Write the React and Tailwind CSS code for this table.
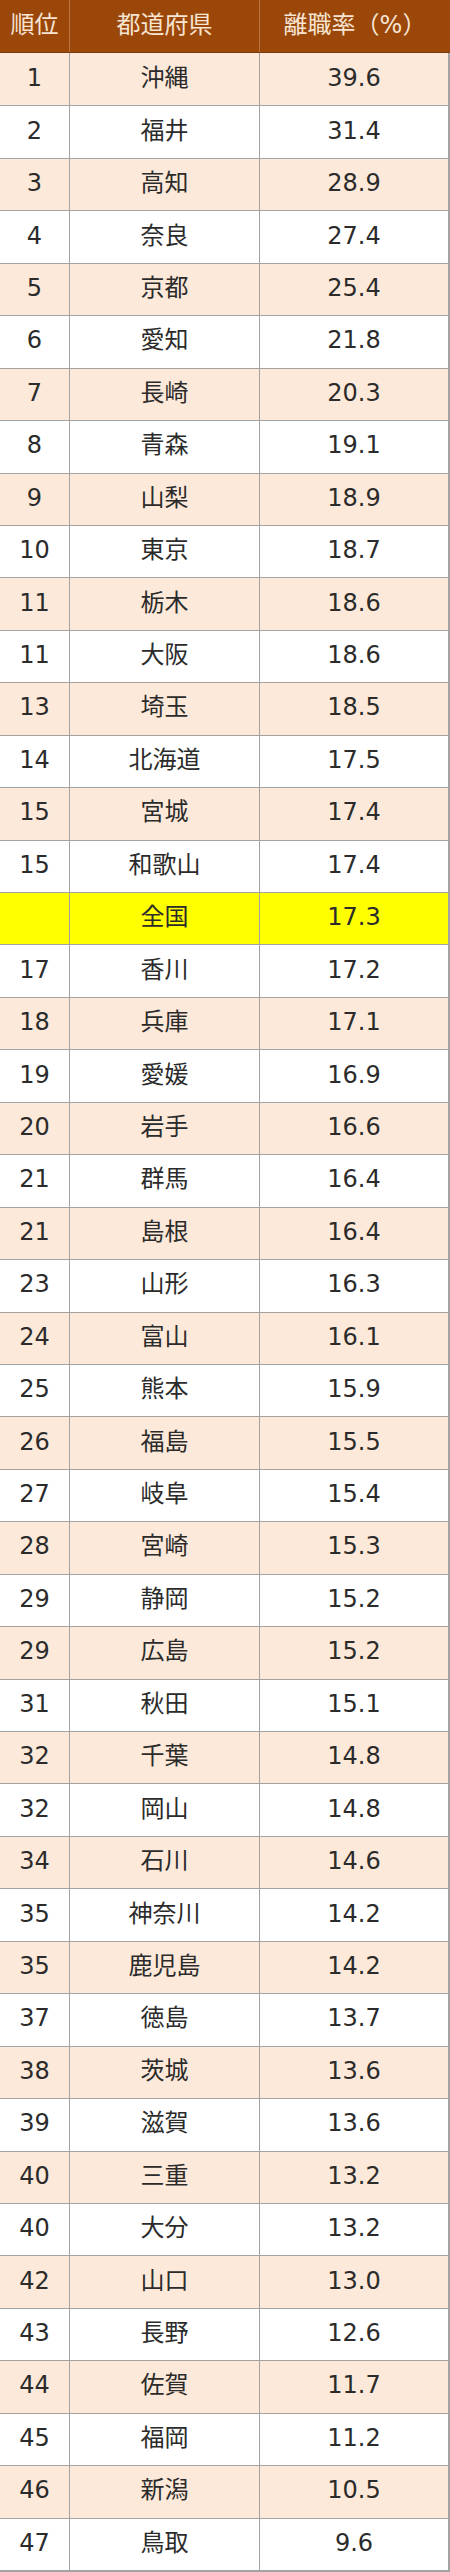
const ROWS = [
  ['1', '沖縄', '39.6'], ['2', '福井', '31.4'], ['3', '高知', '28.9'], ['4', '奈良', '27.4'],
  ['5', '京都', '25.4'], ['6', '愛知', '21.8'], ['7', '長崎', '20.3'], ['8', '青森', '19.1'],
  ['9', '山梨', '18.9'], ['10', '東京', '18.7'], ['11', '栃木', '18.6'], ['11', '大阪', '18.6'],
  ['13', '埼玉', '18.5'], ['14', '北海道', '17.5'], ['15', '宮城', '17.4'], ['15', '和歌山', '17.4'],
  ['', '全国', '17.3'], ['17', '香川', '17.2'], ['18', '兵庫', '17.1'], ['19', '愛媛', '16.9'],
  ['20', '岩手', '16.6'], ['21', '群馬', '16.4'], ['21', '島根', '16.4'], ['23', '山形', '16.3'],
  ['24', '富山', '16.1'], ['25', '熊本', '15.9'], ['26', '福島', '15.5'], ['27', '岐阜', '15.4'],
  ['28', '宮崎', '15.3'], ['29', '静岡', '15.2'], ['29', '広島', '15.2'], ['31', '秋田', '15.1'],
  ['32', '千葉', '14.8'], ['32', '岡山', '14.8'], ['34', '石川', '14.6'], ['35', '神奈川', '14.2'],
  ['35', '鹿児島', '14.2'], ['37', '徳島', '13.7'], ['38', '茨城', '13.6'], ['39', '滋賀', '13.6'],
  ['40', '三重', '13.2'], ['40', '大分', '13.2'], ['42', '山口', '13.0'], ['43', '長野', '12.6'],
  ['44', '佐賀', '11.7'], ['45', '福岡', '11.2'], ['46', '新潟', '10.5'], ['47', '鳥取', '9.6'],
]

function rowBg(i) {
  if (i === 16) return 'bg-[#ffff00]'
  return i % 2 === 0 ? 'bg-[#fde9d9]' : 'bg-white'
}

export default function App() {
  return (
    <div className="w-[450px] bg-white text-[24px] leading-none text-[#2b2b2b] font-['DejaVu_Sans','Noto_Sans_CJK_JP',sans-serif]">
      {/* Header */}
      <div className="grid grid-cols-[69px_190px_1fr] h-[53px] bg-[#9a4709] text-[#f7e4d2] border-b border-[#7a3a0a]">
        <div className="flex items-center justify-center pb-[2px]">順位</div>
        <div className="flex items-center justify-center pb-[2px] border-l border-[#b87340]">都道府県</div>
        <div className="flex items-center justify-center pb-[2px] border-l border-[#b87340]">離職率（%）</div>
      </div>

      {/* Rows */}
      <div className="border-r-2 border-b-2 border-[#a3a3a3]">
        {ROWS.map(([rank, pref, rate], i) => (
          <div
            key={i}
            className={`grid grid-cols-[69px_190px_1fr] h-[52.45px] ${i > 0 ? 'border-t border-[#a3a3a3]' : ''} ${rowBg(i)}`}
          >
            <div className="flex items-center justify-center pb-[3px]">{rank}</div>
            <div className="flex items-center justify-center pb-[3px] border-l border-[#a3a3a3]">{pref}</div>
            <div className="flex items-center justify-center pb-[3px] border-l border-[#a3a3a3]">{rate}</div>
          </div>
        ))}
      </div>
    </div>
  )
}
